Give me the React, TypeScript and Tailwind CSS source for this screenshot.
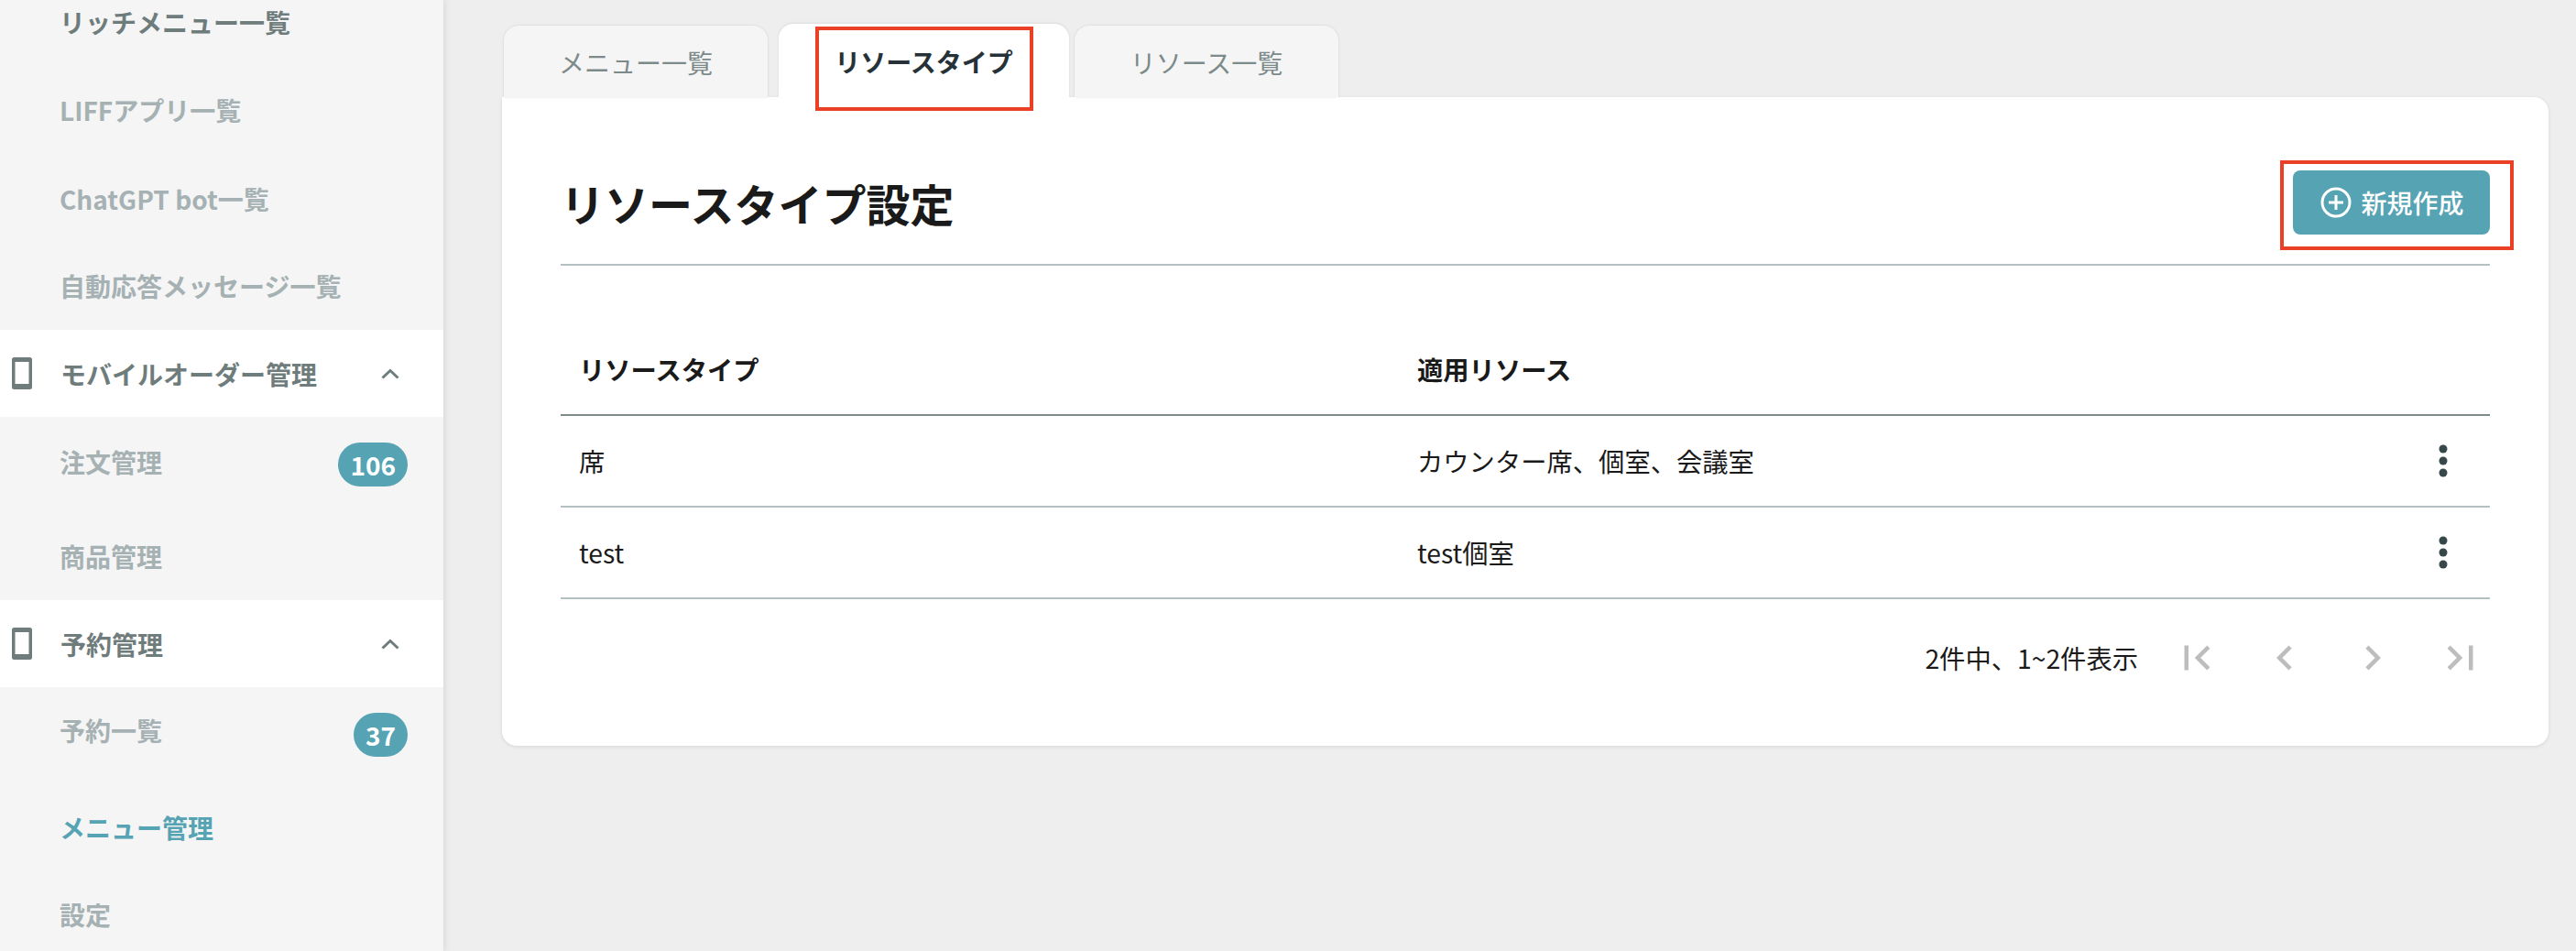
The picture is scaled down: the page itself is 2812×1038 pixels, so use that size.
import React from "react";

const font = { fontFamily: '"Noto Sans CJK JP", "Noto Sans", sans-serif' };

function PhoneIcon() {
  return (
    <svg width="22" height="35" viewBox="0 0 22 35" className="shrink-0">
      <path fillRule="evenodd" fill="#6f7c7c" d="M2.500 0h17A2.500 2.500 0 0 1 22 2.500v30a2.500 2.500 0 0 1-2.500 2.500h-17A2.500 2.500 0 0 1 0 32.500v-30A2.500 2.500 0 0 1 2.500 0zM3.500 5v24h15V5z" />
    </svg>
  );
}

function Chevron() {
  return (
    <svg width="20" height="12" viewBox="0 0 20 12" className="shrink-0">
      <path fill="none" stroke="#6f7c7c" strokeWidth="3" d="M1.500 10.500 10 2.500l8.500 8" />
    </svg>
  );
}

function SubItem({ label, className = "", textClass = "", color = "text-[#a5b1b3]", badge }: { label: string; className?: string; textClass?: string; color?: string; badge?: string }) {
  return (
    <div className={`flex items-center pl-[65px] pr-[39px] justify-between ${className}`}>
      <span className={`text-[28px] font-bold leading-none ${color} ${textClass}`}>{label}</span>
      {badge && (
        <span className="h-[48px] px-[13px] rounded-full bg-[#56a3b4] text-white text-[28px] font-bold leading-[48px] mt-[4px]">{badge}</span>
      )}
    </div>
  );
}

function ParentItem({ label }: { label: string }) {
  return (
    <div className="h-[95px] bg-white flex items-center pl-[13px] pr-[48px]">
      <PhoneIcon />
      <span className="ml-[31px] flex-1 text-[28px] font-bold leading-none text-[#6f7c7c]">{label}</span>
      <Chevron />
    </div>
  );
}

function Kebab() {
  return (
    <svg width="10" height="36" viewBox="0 0 10 36" className="ml-auto mr-[46px] -mt-[1px]" fill="#37474a">
      <circle cx="5" cy="5" r="4.500" />
      <circle cx="5" cy="18" r="4.500" />
      <circle cx="5" cy="31" r="4.500" />
    </svg>
  );
}

function PageIcon({ d }: { d: string }) {
  return (
    <span className="w-[96px] flex justify-center">
      <svg width="54" height="54" viewBox="0 0 24 24" fill="#bdbdbd"><path d={d} /></svg>
    </span>
  );
}

function Tab({ label, className }: { label: string; className: string }) {
  return (
    <div className={`w-[288px] h-[78px] pt-[2px] rounded-t-[16px] bg-[#f5f5f5] shadow-[0_0_3px_rgba(0,0,0,0.12)] flex items-center justify-center text-[28px] leading-none text-[#7c8a8a] ${className}`}>
      {label}
    </div>
  );
}

export default function App() {
  const rows = [
    ["席", "カウンター席、個室、会議室"],
    ["test", "test個室"],
  ];
  return (
    <div style={font} className="w-[2812px] h-[1038px] overflow-hidden flex bg-[#eeeeee]">
      <aside className="w-[484px] shrink-0 h-full bg-[#f5f5f5] shadow-[3px_0_6px_rgba(0,0,0,0.07)] overflow-hidden">
        <div className="-mt-[23px] flex flex-col">
          <SubItem label="リッチメニュー一覧" color="text-[#6f7c7c]" textClass="mb-[3px]" className="h-[96px]" />
          <SubItem label="LIFFアプリ一覧" textClass="mb-[3px]" className="h-[96px]" />
          <SubItem label="ChatGPT bot一覧" className="h-[96px]" />
          <SubItem label="自動応答メッセージ一覧" textClass="mb-[2px]" className="h-[95px]" />
          <ParentItem label="モバイルオーダー管理" />
          <SubItem label="注文管理" badge="106" textClass="mb-[3px]" className="h-[100px]" />
          <SubItem label="商品管理" textClass="mt-[3px]" className="h-[100px]" />
          <ParentItem label="予約管理" />
          <SubItem label="予約一覧" badge="37" textClass="mb-[6px]" className="h-[100px]" />
          <SubItem label="メニュー管理" color="text-[#56a3b4]" className="h-[106px]" />
          <SubItem label="設定" textClass="mb-[7px]" className="h-[90px]" />
        </div>
      </aside>

      <main className="flex-1 pl-[64px] pr-[30px] pt-[26px]">
        <div className="relative z-10 flex items-end pl-[2px] h-[80px]">
          <Tab label="メニュー一覧" className="" />
          <div className="relative ml-[12px] w-[317px] h-[80px] pt-[2px] rounded-t-[16px] bg-white shadow-[0_-1px_3px_rgba(0,0,0,0.08)] flex items-center justify-center text-[28px] leading-none font-bold text-[#263238]">
            リソースタイプ
            <div className="absolute left-[40px] top-[3px] w-[238px] h-[92px] border-[4px] border-[#ea4126]" />
          </div>
          <Tab label="リソース一覧" className="ml-[6px]" />
        </div>

        <section className="h-[708px] bg-white rounded-b-[16px] rounded-tr-[16px] shadow-[0_1px_4px_rgba(0,0,0,0.1)] px-[64px] pt-[80px]">
          <div className="flex items-center justify-between pb-[32px] border-b-2 border-[#b4c0c1]">
            <h1 className="text-[48px] font-bold leading-none text-[#1a1a1a]">リソースタイプ設定</h1>
            <button className="relative w-[215px] h-[70px] rounded-[8px] bg-[#56a3b4] flex items-center justify-center text-white text-[28px] font-medium leading-none">
              <svg width="34" height="34" viewBox="0 0 34 34" fill="none" stroke="#fff" strokeWidth="3" className="mr-[10px] ml-[2px]">
                <circle cx="17" cy="17" r="15" />
                <path d="M17 9v16M9 17h16" />
              </svg>
              新規作成
              <span className="absolute -left-[14px] -right-[26px] -top-[11px] -bottom-[17px] border-[4px] border-[#ea4126]" />
            </button>
          </div>

          <table className="mt-[63px] w-full border-collapse table-fixed text-[28.3px] text-[#1a1a1a]">
            <thead>
              <tr className="h-[100px] border-b-2 border-[#7f8b8b]">
                <th className="w-[915px] pl-[20px] pt-[2px] text-left font-bold">リソースタイプ</th>
                <th className="pl-[20px] pt-[2px] text-left font-bold">適用リソース</th>
                <th className="w-[120px]" />
              </tr>
            </thead>
            <tbody>
              {rows.map((r) => (
                <tr key={r[0]} className="h-[100px] border-b-2 border-[#b4c0c1]">
                  <td className="pl-[20px]">{r[0]}</td>
                  <td className="pl-[20px]">{r[1]}</td>
                  <td><div className="flex"><Kebab /></div></td>
                </tr>
              ))}
            </tbody>
          </table>

          <div className="mt-[16px] h-[96px] flex items-center justify-end -mr-[16px] text-[28.3px] text-[#1a1a1a]">
            <span className="mr-[16px]">2件中、1~2件表示</span>
            <PageIcon d="M18.41 16.59L13.82 12l4.59-4.590L17 6l-6 6 6 6zM6 6h2v12H6z" />
            <PageIcon d="M15.41 7.410L14 6l-6 6 6 6 1.410-1.410L10.830 12z" />
            <PageIcon d="M10 6L8.590 7.410 13.170 12l-4.580 4.590L10 18l6-6z" />
            <PageIcon d="M5.590 7.410L10.180 12l-4.590 4.590L7 18l6-6-6-6zM16 6h2v12h-2z" />
          </div>
        </section>
      </main>
    </div>
  );
}
